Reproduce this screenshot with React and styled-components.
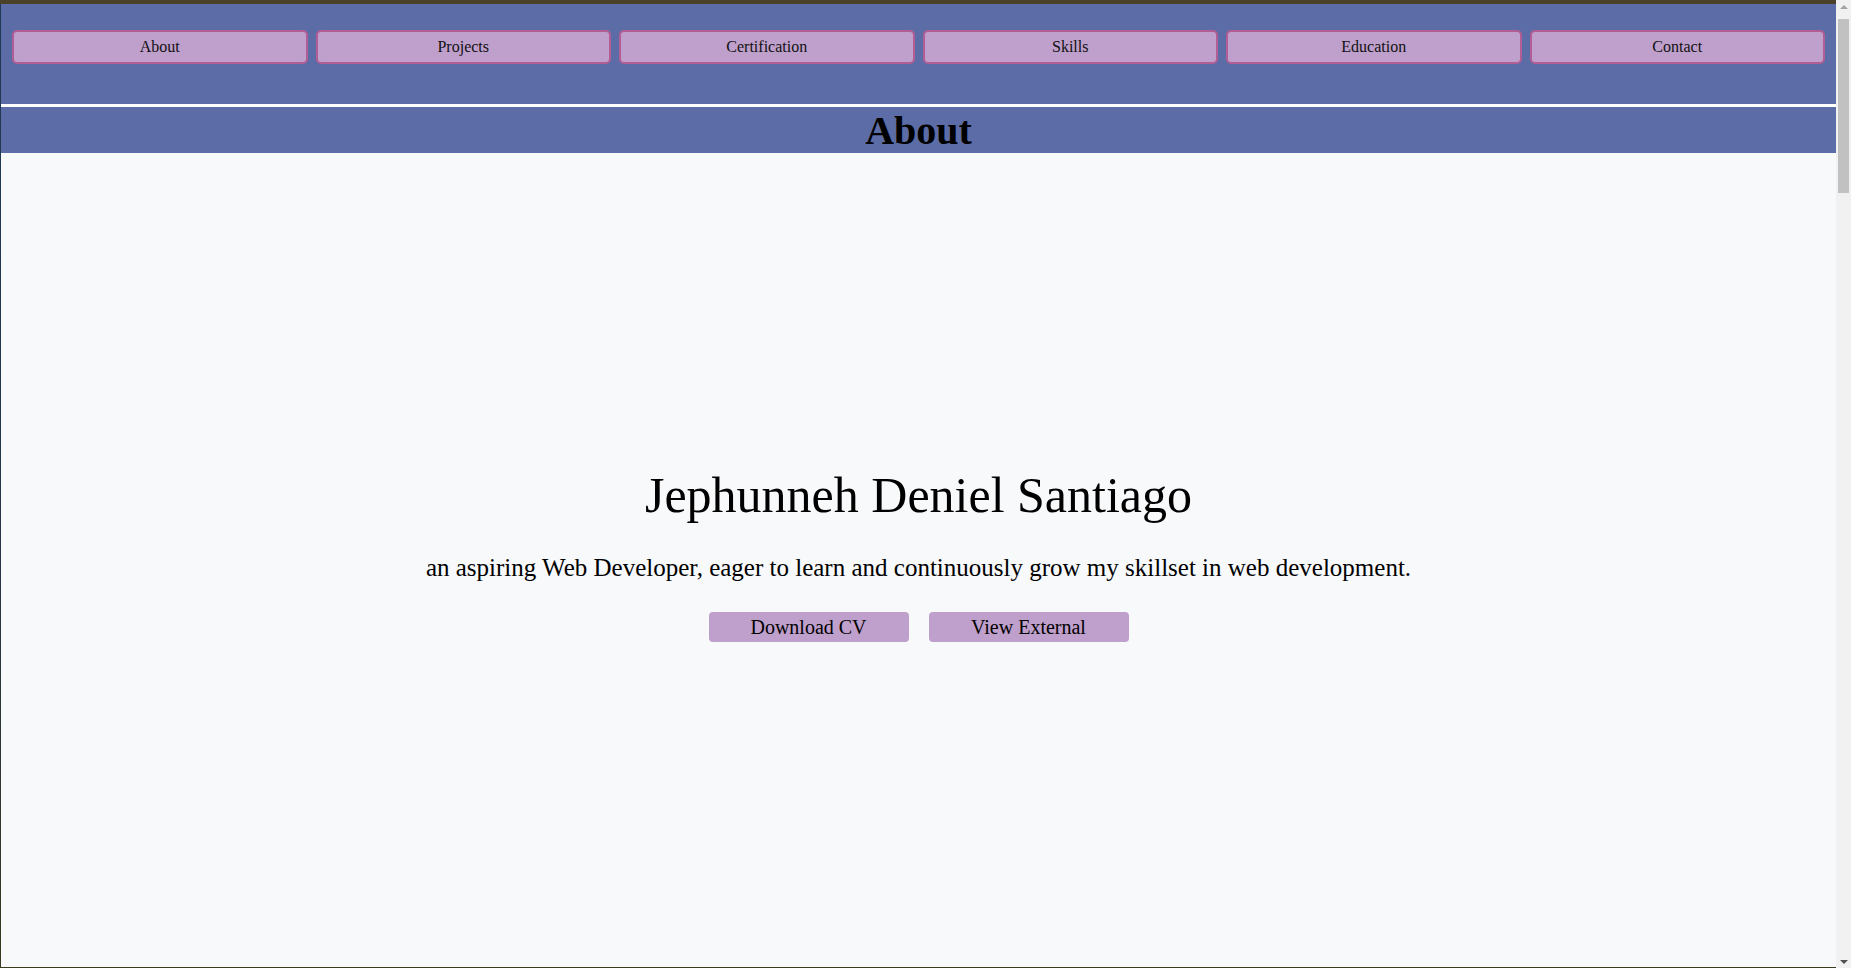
import React from "react";
import styled, { createGlobalStyle } from "styled-components";

const GlobalStyle = createGlobalStyle`
  html { background: #f1f1f1; padding: 0; }
  body {
    margin: 0 15px 0 0;
    padding: 4px 0 0 1px;
    min-height: 100vh;
    font-family: "Liberation Serif", "Times New Roman", serif;
    background: linear-gradient(180deg, #4a4128 0 4px, #1f3b58 4px, #263545 60%, #3a3a1f 100%);
    color: #000;
  }
  * { box-sizing: border-box; }
`;

const Page = styled.div`
  background: #f8f9fb;
`;

const Nav = styled.nav`
  background: #5b6ca6;
  padding: 26px 11px 40px;
  display: grid;
  grid-template-columns: repeat(6, 1fr);
  gap: 8px;
  border-bottom: 3px solid #ffffff;
`;

const NavButton = styled.a`
  display: flex;
  align-items: center;
  justify-content: center;
  height: 34px;
  background: #bf9fcb;
  border: 2px solid #b35d95;
  border-radius: 5px;
  font-size: 16px;
  color: #111;
  text-decoration: none;
  cursor: pointer;
`;

const SectionTitle = styled.h1`
  margin: 0;
  background: #5b6ca6;
  height: 46px;
  line-height: 48px;
  text-align: center;
  font-size: 40px;
  font-weight: 700;
  color: #000;
`;

const Section = styled.section`
  display: flex;
  flex-direction: column;
  align-items: center;
  padding-top: 312px;
  height: 814px;
`;

const Name = styled.h2`
  margin: 0;
  font-size: 50px;
  line-height: 60px;
  font-weight: 400;
`;

const Tagline = styled.p`
  margin: 28px 0 0;
  font-size: 25px;
  line-height: 30px;
`;

const Actions = styled.div`
  display: flex;
  gap: 20px;
  margin-top: 29px;
`;

const ActionButton = styled.a`
  display: flex;
  align-items: center;
  justify-content: center;
  width: 200px;
  height: 30px;
  background: #bf9fcb;
  border-radius: 4px;
  font-size: 20px;
  color: #000;
  text-decoration: none;
`;

/* browser scrollbar drawn over the right edge */
const Scrollbar = styled.aside`
  position: fixed;
  top: 0;
  right: 0;
  width: 15px;
  height: 100vh;
  background: #f1f1f1;
  display: flex;
  flex-direction: column;
  align-items: center;
`;

const Arrow = styled.div`
  height: 17px;
  width: 15px;
  display: flex;
  align-items: center;
  justify-content: center;
  margin-top: ${(p) => (p.$down ? "auto" : "0")};
  &::before {
    content: "";
    width: 0;
    height: 0;
    border-left: 4px solid transparent;
    border-right: 4px solid transparent;
    ${(p) =>
      p.$down
        ? `border-top: 4px solid #505050; margin-top: 4px;`
        : `border-bottom: 4px solid #a3a3a3; margin-top: -4px;`}
  }
`;

const Thumb = styled.div`
  width: 11px;
  height: 174px;
  margin-top: 2px;
  background: #c1c1c1;
`;

const navItems = ["About", "Projects", "Certification", "Skills", "Education", "Contact"];

export default function App() {
  return (
    <>
      <GlobalStyle />
      <Page>
        <Nav>
          {navItems.map((n) => (
            <NavButton key={n} href={`#${n.toLowerCase()}`}>
              {n}
            </NavButton>
          ))}
        </Nav>
        <div id="about">
          <SectionTitle>About</SectionTitle>
          <Section>
            <Name>Jephunneh Deniel Santiago</Name>
            <Tagline>
              an aspiring Web Developer, eager to learn and continuously grow my skillset in web development.
            </Tagline>
            <Actions>
              <ActionButton href="#">Download CV</ActionButton>
              <ActionButton href="#">View External</ActionButton>
            </Actions>
          </Section>
        </div>
      </Page>
      <Scrollbar aria-hidden="true">
        <Arrow />
        <Thumb />
        <Arrow $down />
      </Scrollbar>
    </>
  );
}
